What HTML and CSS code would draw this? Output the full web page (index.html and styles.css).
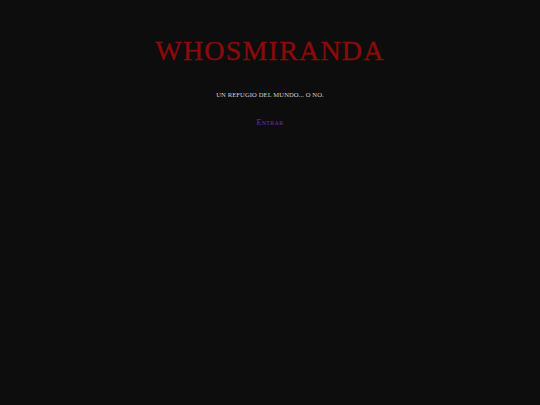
FILE: index.html
```html
<!DOCTYPE html>
<html lang="es">
<head>
<meta charset="utf-8">
<title>whosmiranda</title>
<link rel="stylesheet" href="styles.css">
</head>
<body>
<main class="intro">
  <h1 class="title">whosmiranda</h1>
  <p class="tagline">un refugio del mundo... o no.</p>
  <a class="enter" href="#">Entrar</a>
</main>
</body>
</html>
```
FILE: styles.css
```css
html, body {
  margin: 0;
  padding: 0;
  background: #0d0d0d;
  height: 100%;
}
body {
  font-family: "Liberation Serif", "DejaVu Serif", serif;
}
.intro {
  display: flex;
  flex-direction: column;
  align-items: center;
  padding-top: 35px;
}
.title {
  margin: 0;
  font-weight: normal;
  font-size: 28px;
  line-height: 32px;
  text-transform: uppercase;
  letter-spacing: 1.2px;
  color: #8b0a0a;
  -webkit-text-stroke: 0.4px #8b0a0a;
}
.tagline {
  margin: 23px 0 0;
  font-size: 6.6px;
  line-height: 10px;
  text-transform: uppercase;
  letter-spacing: 0.1px;
  color: #d4d4d4;
}
.enter {
  margin-top: 18px;
  font-size: 8px;
  line-height: 10px;
  font-variant: small-caps;
  letter-spacing: 0.3px;
  color: #6f2fa8;
  text-decoration: none;
}
```
